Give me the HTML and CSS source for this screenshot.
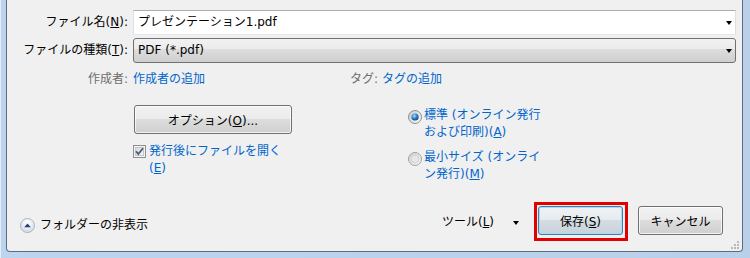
FILE: index.html
```html
<!DOCTYPE html>
<html lang="ja">
<head>
<meta charset="utf-8">
<title>名前を付けて保存</title>
<link rel="stylesheet" href="styles.css">
</head>
<body>
<div class="frame">
  <div class="panel">
    <div class="form">
      <label class="lbl">ファイル名(<u>N</u>):</label>
      <div class="input">プレゼンテーション1.pdf<span class="arrow"></span></div>
      <label class="lbl row2">ファイルの種類(<u>T</u>):</label>
      <div class="combo row2">PDF (*.pdf)<span class="arrow"></span></div>
      <span class="lbl meta gray">作成者:</span>
      <div class="meta meta-row">
        <a class="link author">作成者の追加</a>
        <span class="gray">タグ:</span>&nbsp;<a class="link">タグの追加</a>
      </div>
      <div class="options">
        <div class="opt-left">
          <button class="btn option">オプション(<u>O</u>)...</button>
          <div class="check-row">
            <svg class="checkbox" width="13" height="13" viewBox="0 0 13 13">
              <defs>
                <linearGradient id="cb" x1="0" y1="0" x2="1" y2="1">
                  <stop offset="0" stop-color="#d8d8d8"/>
                  <stop offset="1" stop-color="#f7f7f7"/>
                </linearGradient>
              </defs>
              <rect x="0.5" y="0.5" width="12" height="12" fill="#f4f4f4" stroke="#8e8f8f"/>
              <rect x="2.5" y="2.5" width="8" height="8" fill="url(#cb)" stroke="#c6c6c6"/>
              <path d="M3 6.2 L5.3 9 L10 3.2" fill="none" stroke="#4a5d7e" stroke-width="1.8"/>
            </svg>
            <span class="link">発行後にファイルを開く<br>(<u>E</u>)</span>
          </div>
        </div>
        <div class="opt-right">
          <div class="radio-row">
            <svg class="radio" width="14" height="14" viewBox="0 0 14 14">
              <defs>
                <linearGradient id="rg" x1="0" y1="0" x2="1" y2="1">
                  <stop offset="0" stop-color="#c8c8c8"/>
                  <stop offset="1" stop-color="#fbfbfb"/>
                </linearGradient>
                <radialGradient id="rb" cx="0.4" cy="0.35" r="0.7">
                  <stop offset="0" stop-color="#b6e4fb"/>
                  <stop offset="0.45" stop-color="#2f8fd6"/>
                  <stop offset="1" stop-color="#0b3c6e"/>
                </radialGradient>
              </defs>
              <circle cx="7" cy="7" r="6.5" fill="url(#rg)" stroke="#8e8f8f"/>
              <circle cx="7" cy="7" r="3.6" fill="url(#rb)"/>
            </svg>
            <span class="link nowrap">標準 (オンライン発行<br>および印刷)(<u>A</u>)</span>
          </div>
          <div class="radio-row second">
            <svg class="radio" width="14" height="14" viewBox="0 0 14 14">
              <defs>
                <linearGradient id="rg2" x1="0" y1="0" x2="1" y2="1">
                  <stop offset="0" stop-color="#cfcfcf"/>
                  <stop offset="1" stop-color="#fafafa"/>
                </linearGradient>
              </defs>
              <circle cx="7" cy="7" r="6.5" fill="url(#rg2)" stroke="#a3a3a3"/>
              <circle cx="7" cy="7" r="4" fill="#e6e6e6" stroke="#d2d2d2"/>
            </svg>
            <span class="link nowrap">最小サイズ (オンライ<br>ン発行)(<u>M</u>)</span>
          </div>
        </div>
      </div>
    </div>
    <div class="footer">
      <div class="folder-toggle">
        <svg width="15" height="15" viewBox="0 0 15 15">
          <defs>
            <radialGradient id="fg" cx="0.5" cy="0.3" r="0.7">
              <stop offset="0" stop-color="#ffffff"/>
              <stop offset="1" stop-color="#d5dbe3"/>
            </radialGradient>
          </defs>
          <circle cx="7.5" cy="7.5" r="7" fill="url(#fg)" stroke="#a9b3c0"/>
          <path d="M4.2 9.3 L10.8 9.3 L7.5 5.6 Z" fill="#1d3f7c"/>
        </svg>
        <span>フォルダーの非表示</span>
      </div>
      <div class="spacer"></div>
      <div class="tools">ツール(<u>L</u>)</div>
      <span class="arrow tools-arrow"></span>
      <div class="highlight">
        <button class="btn save">保存(<u>S</u>)</button>
      </div>
      <button class="btn cancel">キャンセル</button>
    </div>
    <svg class="grip" width="9" height="9" viewBox="0 0 9 9">
      <g fill="#b9b9b9">
        <rect x="6" y="0" width="2" height="2"/>
        <rect x="3" y="3" width="2" height="2"/><rect x="6" y="3" width="2" height="2"/>
        <rect x="0" y="6" width="2" height="2"/><rect x="3" y="6" width="2" height="2"/><rect x="6" y="6" width="2" height="2"/>
      </g>
    </svg>
  </div>
</div>
</body>
</html>
```
FILE: styles.css
```css
* { box-sizing: border-box; }
html, body { margin: 0; padding: 0; }
body {
  width: 750px;
  height: 258px;
  overflow: hidden;
  font-family: "DejaVu Sans", "Noto Sans CJK JP", sans-serif;
  font-size: 12px;
  color: #000;
}
u { text-decoration: underline; text-underline-offset: 1px; }

.frame {
  height: 258px;
  padding: 0 7px 6px 6px;
  background: linear-gradient(to right, #e3eef9 0, #e3eef9 1px, #bcd4ed 1px, #b8d0ea 100%);
}
.panel {
  position: relative;
  height: 252px;
  background: #f0f0f0;
  border: 1px solid #5d6d7e;
  border-top: none;
  border-radius: 0 0 4px 4px;
  display: flex;
  flex-direction: column;
}

.form {
  display: grid;
  grid-template-columns: 121px 1fr;
  column-gap: 5px;
  padding: 10px 6px 0 0;
}
.lbl {
  text-align: right;
  line-height: 25px;
  height: 25px;
  white-space: nowrap;
}
.row2 { margin-top: 3px; }

.input {
  position: relative;
  height: 25px;
  line-height: 23px;
  padding-left: 4px;
  background: #fff;
  border: 1px solid #e3e9ef;
  border-top-color: #abadb3;
  border-left-color: #dbdfe6;
  border-right-color: #dbdfe6;
}
.combo {
  position: relative;
  height: 25px;
  line-height: 23px;
  padding-left: 4px;
  border: 1px solid #707070;
  border-radius: 3px;
  background: linear-gradient(#f2f2f2 0, #ebebeb 45%, #dddddd 45%, #cfcfcf 100%);
}
.arrow {
  position: absolute;
  right: 3px;
  top: 10px;
  width: 0;
  height: 0;
  border-left: 3.5px solid transparent;
  border-right: 3.5px solid transparent;
  border-top: 4px solid #000;
}

.meta {
  margin-top: 8px;
  height: 16px;
  line-height: 16px;
}
.gray { color: #6d6d6d; }
.link { color: #0066cc; }
.meta-row { display: flex; white-space: nowrap; }
.author { display: inline-block; width: 217px; }

.options {
  grid-column: 2;
  margin-top: 18px;
  display: flex;
}
.opt-left { width: 275px; }
.btn {
  font-family: inherit;
  font-size: 12px;
  color: #000;
  height: 29px;
  padding: 0;
  border: 1px solid #707070;
  border-radius: 3px;
  background: linear-gradient(#f2f2f2 0, #ebebeb 48%, #dddddd 48%, #cfcfcf 100%);
  box-shadow: inset 0 0 0 1px rgba(255,255,255,0.75);
}
.option { margin-left: 1px; width: 158px; }
.check-row {
  display: flex;
  align-items: flex-start;
  margin-top: 9px;
  line-height: 17px;
}
.checkbox { margin-top: 2px; margin-right: 3px; flex: none; }

.radio-row {
  display: flex;
  align-items: flex-start;
  margin-top: 2px;
  line-height: 17px;
}
.radio-row.second { margin-top: 8px; }
.radio { margin-top: 3px; margin-right: 2px; flex: none; }
.nowrap { white-space: nowrap; }

.footer {
  margin-top: auto;
  margin-bottom: 10px;
  height: 39px;
  display: flex;
  align-items: flex-start;
  padding: 0 19px 0 13px;
}
.folder-toggle {
  display: flex;
  align-items: center;
  margin-top: 16px;
  line-height: 15px;
}
.folder-toggle svg { margin-right: 5px; }
.spacer { flex: 1; }
.tools {
  margin-top: 12px;
  line-height: 16px;
}
.tools-arrow {
  position: static;
  margin: 19px 15px 0 19px;
}
.highlight {
  border: 3px solid #e30000;
  padding: 1px 2px 3px 1px;
}
.save {
  display: block;
  width: 85px;
  border-color: #3c7fb1;
  box-shadow: inset 0 0 0 1px #a6dcf5;
  background: linear-gradient(#f0f3f5 0, #e6ebef 48%, #d4dde3 48%, #c8d2d9 100%);
}
.cancel {
  width: 85px;
  margin-top: 4px;
  margin-left: 10px;
}
.grip {
  position: absolute;
  right: 2px;
  bottom: 1px;
}
```
